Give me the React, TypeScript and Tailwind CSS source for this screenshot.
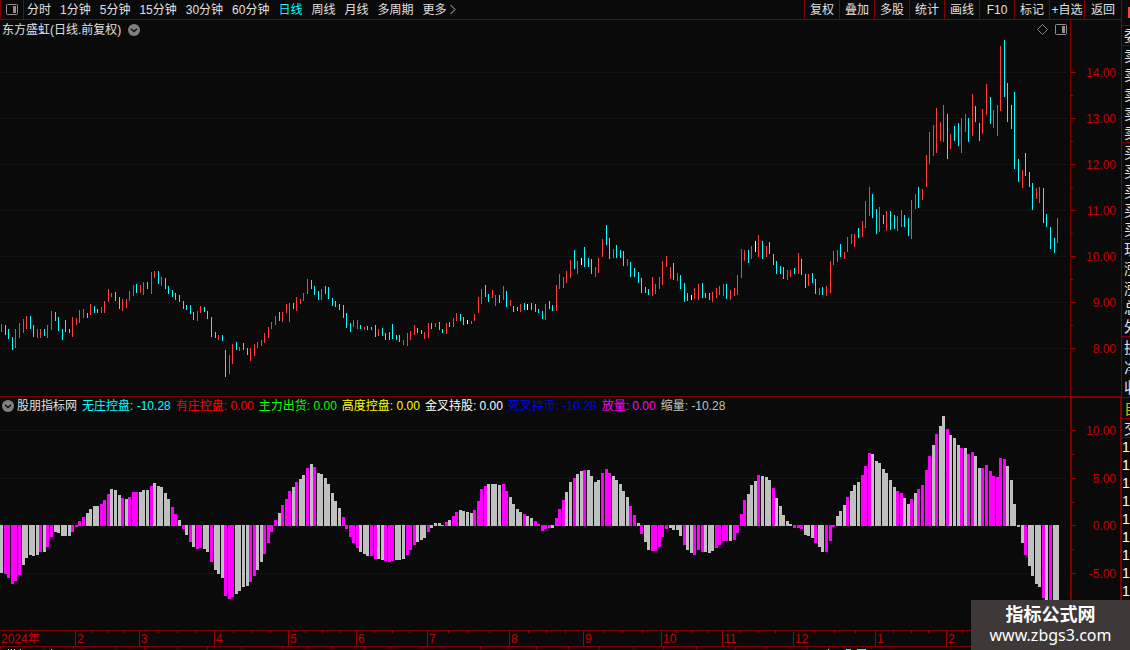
import clsx from "clsx";

const PERIODS = ["分时", "1分钟", "5分钟", "15分钟", "30分钟", "60分钟", "日线", "周线", "月线", "多周期", "更多"];
const TOOLS = ["复权", "叠加", "多股", "统计", "画线", "F10", "标记", "+自选", "返回"];

const LEGEND = [
  { label: "无庄控盘", value: "-10.28", color: "text-[#00ffff]" },
  { label: "有庄控盘", value: "0.00", color: "text-[#ff0000]" },
  { label: "主力出货", value: "0.00", color: "text-[#00ff00]" },
  { label: "高度控盘", value: "0.00", color: "text-[#ffff00]" },
  { label: "金叉持股", value: "0.00", color: "text-white" },
  { label: "死叉持币", value: "-10.28", color: "text-[#0000ff]" },
  { label: "放量", value: "0.00", color: "text-[#ff00ff]" },
  { label: "缩量", value: "-10.28", color: "text-[#c0c0c0]" },
];

const MONTHS = [
  { label: "2024年", start: 0 },
  { label: "2", start: 75 },
  { label: "3", start: 139 },
  { label: "4", start: 214 },
  { label: "5", start: 288 },
  { label: "6", start: 356 },
  { label: "7", start: 427 },
  { label: "8", start: 509 },
  { label: "9", start: 583 },
  { label: "10", start: 661 },
  { label: "11", start: 722 },
  { label: "12", start: 793 },
  { label: "1", start: 875 },
  { label: "2", start: 946 },
];
const TIME_END = 1008;

const QUOTE_GROUPS = [
  { rows: ["委"], height: "h-[20px]", color: "text-[#e0e0e0]" },
  { rows: ["卖", "卖", "卖", "卖", "卖"], height: "h-[97px]", color: "text-[#e0e0e0]" },
  { rows: ["买", "买", "买", "买", "买"], height: "h-[97px]", color: "text-[#e0e0e0]" },
  { rows: ["现", "涨", "涨", "总", "外"], height: "h-[97px]", color: "text-[#e0e0e0]" },
  { rows: ["换", "净", "收"], height: "h-[61px]", color: "text-[#e0e0e0]" },
  { rows: ["自"], height: "h-[21px]", color: "text-[#c0c000]" },
  { rows: ["交"], height: "h-[19px]", color: "text-[#e0e0e0]" },
];

// colour + high-low, r = up, c = down, w = flat
const CANDLES = `
r324-332 c325-335 c329-339 c337-350 r329-348 r323-338 r319-333 r316-329 c316-329 c325-337
r329-338 r329-338 c329-336 r325-338 r311-330 c312-321 c317-331 c329-340 c320-332 c329-333
r317-337 r318-325 r310-323 r309-318 c313-318 r304-315 c306-313 c309-313 r307-313 r301-313
r289-302 r293-297 c292-301 c297-309 r299-311 r299-308 r291-301 r285-296 c284-293 r285-293
r282-295 c282-289 r272-294 r271-278 c271-284 r277-286 c278-289 c286-294 c290-297 c293-300
c295-302 c301-309 c305-310 c305-314 c312-320 r311-321 r306-313 c307-312 c311-319 c317-337
c332-338 r335-340 c335-341 c350-377 r355-374 r344-364 c342-350 r347-351 c343-350 c348-355
r348-361 r344-356 r342-348 r340-346 r333-343 r327-338 r322-329 r316-325 c312-321 r312-322
r304-313 r303-322 c303-309 r297-311 r299-304 r293-301 r279-294 c280-289 c286-295 c291-300
r289-300 c286-294 c287-299 c298-306 c301-307 c304-310 c305-318 c313-328 c323-332 r320-327
r320-329 c325-329 r327-330 c326-330 c327-330 c325-337 r329-336 c328-336 c333-340 c332-340
c324-339 c335-340 c335-342 r340-345 r333-346 r331-340 r325-335 c328-333 c330-334 r332-339
r323-338 c323-329 r323-327 c322-330 c329-333 r323-334 c322-327 r318-327 r313-321 c314-321
c317-325 w320-324 r321-324 r314-321 r297-313 r289-304 c285-297 c294-302 r290-298 r295-306
c295-303 r286-300 c291-307 r300-306 c306-312 c307-311 r304-312 c303-310 w304-310 c303-310
c304-312 c309-313 c311-319 r304-320 c301-309 c305-311 r285-311 r274-289 r277-288 r271-283
r260-278 c250-269 r261-274 w258-265 c247-267 c258-267 c259-274 r267-277 r258-273 r239-257
c225-245 c238-259 r249-258 c245-258 c250-258 c251-266 r259-266 c262-277 c268-277 c272-283
c278-293 c287-293 c289-295 r277-296 r284-294 r277-289 r261-285 r256-267 r267-279 c263-280
r273-281 c275-289 c283-302 c293-301 w295-300 r288-299 r284-300 c283-298 c293-298 c293-300
r292-302 r288-298 r286-295 r284-296 c284-299 r290-300 r288-296 r275-295 r249-278 r250-261
c250-263 r246-259 w241-252 r235-257 c241-259 r246-257 c242-254 c254-265 c261-274 c266-274
c267-279 r270-280 r270-277 c268-274 r253-274 c259-275 c274-288 r274-286 c273-283 c279-294
r288-295 c287-295 r286-296 r261-293 r251-265 r250-262 c244-257 r252-259 r237-252 r234-244
r234-247 c228-238 r221-237 r201-228 r187-216 c194-218 c209-234 r207-232 c215-224 r211-231
c211-230 c215-229 r216-231 r210-227 c215-227 c218-236 r200-239 r194-209 c187-208 r189-200
r155-187 r132-164 r125-156 r108-153 r122-141 r105-142 c114-159 r134-149 c126-141 c123-146
r118-153 r114-132 c118-142 r94-136 c106-122 c123-141 r109-134 r84-115 c97-124 r110-128
r105-136 r46-111 c40-97 c83-122 c105-129 c92-169 c159-182 r170-188 c153-176 c172-187
c183-210 r188-199 r187-203 c188-223 c214-227 c227-249 c238-253 r218-243
`;

// m = volume up, g = volume down
const CONTROL = `
g573 m574 m578 m584 m581 m575 g565 g558 g555 g556 g555 m552 g552 m547 m537 g532 g533 g536 g536 g536
m532 m527 m521 m517 g513 g509 g506 g506 m504 m500 m494 g489 g490 g495 m498 g499 m497 m492 m492 g492
g490 g490 m486 g483 g486 g487 g493 g499 m507 m514 g520 m529 g535 m542 g547 m549 m548 g549 g552 m562
g570 g574 g578 m596 m599 m597 g594 g591 g587 g586 m582 m576 g570 g562 m554 m543 m532 m520 g513 m505
m499 m491 g487 m482 g479 g475 m468 g464 m467 g473 g474 g478 g484 g493 g501 g508 m517 m529 m537 m543
m548 g552 g554 g556 m556 m559 g559 g560 m561 m562 m561 g560 g560 g559 m555 m550 m545 g542 g540 g538
m532 g528 g523 g523 g525 m522 g520 m516 m512 g510 g511 g512 g513 m510 m501 m489 m486 g484 g484 g484
g485 m484 m491 g497 g504 g509 g512 m514 g516 g518 m521 m524 m531 m529 m528 g528 m518 m509 m500 g492
g482 m478 g474 g471 m470 g470 g476 g482 g480 m473 m469 m473 g476 g480 g484 g491 g497 m506 m515 g523
m534 g542 g550 m551 m551 m547 m537 m529 g528 g530 g530 g536 m545 g550 g553 m555 m550 m552 g552 g553
g551 m548 m545 m541 m541 g541 m540 m533 m514 m500 g494 g485 g481 m475 g476 g477 g480 m488 g498 g506
g515 g521 g524 m528 m528 m529 g535 g536 g538 m543 g547 g552 m552 m541 m527 g516 g511 g505 m497 g491
g485 g482 m475 m466 m453 g454 g461 g463 g469 g473 g480 g487 m491 m493 g498 g504 m499 g493 m489 m485
m470 m456 g445 m434 g426 g416 m429 g435 g438 g445 m448 g448 m454 m452 g456 g468 m468 m465 m471 m476
m477 m458 m459 g466 g480 g504 g527 g543 m555 g566 g576 g584 g587 m598 g605 m611 g617 g623
`;

const FILLS: Record<string, string> = {
  r: "#ff3c3c",
  c: "#00ffff",
  w: "#ffffff",
  m: "#ff00ff",
  g: "#c0c0c0",
};

const ZERO = 525;

const candles = CANDLES.trim().split(/\s+/).map((item) => {
  const [high, low] = item.slice(1).split("-").map(Number);
  return { fill: FILLS[item[0]], high, low };
});

const bars = CONTROL.trim().split(/\s+/).map((item) => {
  const y = Number(item.slice(1));
  const top = Math.min(y, ZERO);
  return { fill: FILLS[item[0]], top, height: Math.max(y, ZERO + 1) - top };
});

const barX = (i: number) => Math.floor(1.75 + i * 3.555);

function GridLines({ rows }: { rows: number[] }) {
  return (
    <>
      {rows.map((y) => (
        <line key={y} x1="1" x2="1067" y1={y + 0.5} y2={y + 0.5} stroke="#800000" strokeDasharray="1 3" />
      ))}
    </>
  );
}

type AxisProps = { top: number; width: number; height: number; ticks: [number, string][]; minor: number[]; x: number };

function Axis({ top, width, height, ticks, minor, x }: AxisProps) {
  return (
    <svg className="block h-full w-full" viewBox={`${x} ${top} ${width} ${height}`} preserveAspectRatio="xMinYMin meet">
      {ticks.map(([y, label]) => (
        <g key={label}>
          <rect x={x} y={y} width={1076 - x} height="1" fill="#a00000" />
          <text x="1116" y={y + 5} textAnchor="end" fontSize="12" fill="#c80000">
            {label}
          </text>
        </g>
      ))}
      {minor.map((y) => (
        <rect key={y} x={x} y={y} width="2" height="1" fill="#a00000" />
      ))}
    </svg>
  );
}

function PanelIcon() {
  return (
    <svg className="block h-[11px] w-3" viewBox="0 0 12 11">
      <rect x="0.5" y="0.5" width="11" height="10" rx="1" fill="none" stroke="#909090" />
      <rect x="7" y="2" width="3" height="7" fill="#909090" />
    </svg>
  );
}

function CollapseButton({ label }: { label: string }) {
  return (
    <button aria-label={label} className="block h-3 w-3">
      <svg className="block h-3 w-3" viewBox="0 0 12 12">
        <circle cx="6" cy="6" r="6" fill="#808080" />
        <path d="M3 4.8 6 7.6 9 4.8" fill="none" stroke="#0a0a0a" strokeWidth="1.3" />
      </svg>
    </button>
  );
}

function Toolbar() {
  return (
    <header className="flex h-5 items-stretch border-b border-[#800000] text-[#e0e0e0]">
      <button aria-label="面板" className="flex w-6 items-center justify-center border-x border-[#800000]">
        <PanelIcon />
      </button>
      <nav className="flex items-center gap-[9px] pl-[3px]">
        {PERIODS.map((p) => (
          <button key={p} className={clsx("whitespace-nowrap", p === "日线" && "text-[#00ffff]")}>
            {p}
          </button>
        ))}
      </nav>
      <svg className="ml-[3px] h-[11px] w-[6px] self-center" viewBox="0 0 6 11">
        <path d="M0.5 1 5 5.5 0.5 10" fill="none" stroke="#c0c0c0" />
      </svg>
      <div className="ml-auto flex">
        {TOOLS.map((t) => (
          <button key={t} className="w-[35px] whitespace-nowrap border-l border-[#800000] last:w-[37px]">
            {t}
          </button>
        ))}
      </div>
    </header>
  );
}

function PricePanel() {
  return (
    <section className="flex h-[376px]">
      <div className="min-w-0 flex-1">
        <div className="flex h-5 items-center pb-px pl-[2px] pr-[3px] text-[#e0e0e0]">
          <h1>东方盛虹(日线.前复权)</h1>
          <div className="ml-[7px]">
            <CollapseButton label="展开" />
          </div>
          <div className="ml-auto flex items-center gap-[7px]">
            <svg className="h-[11px] w-[11px]" viewBox="0 0 11 11">
              <path d="M5.5 0.5 10.5 5.5 5.5 10.5 0.5 5.5Z" fill="none" stroke="#808080" />
            </svg>
            <PanelIcon />
          </div>
        </div>
        <svg
          className="block h-[356px] w-full"
          viewBox="0 40 1070 356"
          preserveAspectRatio="none"
          shapeRendering="crispEdges"
        >
          <GridLines rows={[72, 118, 164, 210, 256, 302, 348]} />
          {candles.map((c, i) => (
            <rect key={i} x={barX(i)} y={c.high} width="1" height={c.low - c.high} fill={c.fill} />
          ))}
        </svg>
      </div>
      <div className="w-[51px] border-l border-[#800000]">
        <Axis
          x={1071}
          top={20}
          width={50}
          height={376}
          ticks={[
            [72, "14.00"],
            [118, "13.00"],
            [164, "12.00"],
            [210, "11.00"],
            [256, "10.00"],
            [302, "9.00"],
            [348, "8.00"],
          ]}
          minor={[95, 141, 187, 233, 279, 325]}
        />
      </div>
    </section>
  );
}

function ControlPanel() {
  return (
    <section className="flex h-[234px]">
      <div className="min-w-0 flex-1 border-t border-[#800000]">
        <div className="flex h-[18px] items-center gap-[5px] whitespace-nowrap pb-px pl-[2px]">
          <div className="flex items-center gap-[3px] text-[#e0e0e0]">
            <CollapseButton label="收起" />
            <h2>股朋指标网</h2>
          </div>
          {LEGEND.map((item) => (
            <span key={item.label} className={item.color}>
              {item.label}: {item.value}
            </span>
          ))}
        </div>
        <svg
          className="block h-[215px] w-full"
          viewBox="0 415 1070 215"
          preserveAspectRatio="none"
          shapeRendering="crispEdges"
        >
          <GridLines rows={[430, 478, 525, 573]} />
          {bars.map((b, i) => (
            <rect key={i} x={barX(i) - 1} y={b.top} width="3" height={b.height} fill={b.fill} />
          ))}
        </svg>
      </div>
      <div className="w-[51px] border-l-2 border-r border-t-2 border-[#800000]">
        <Axis
          x={1072}
          top={398}
          width={48}
          height={232}
          ticks={[
            [430, "10.00"],
            [478, "5.00"],
            [525, "0.00"],
            [573, "-5.00"],
          ]}
          minor={[454, 502, 549]}
        />
      </div>
    </section>
  );
}

function TimeAxis() {
  return (
    <div className="flex h-[17px] border-y border-[#800000] text-[#c80000]">
      {MONTHS.map((m, i) => {
        const end = MONTHS[i + 1]?.start ?? TIME_END;
        return (
          <div
            key={m.start}
            className={clsx("relative shrink-0 pl-px leading-[17px]", i > 0 && "border-l border-[#a00000]")}
            style={{ width: end - m.start }}
          >
            {m.label}
            {i > 0 && (
              <div className="absolute inset-x-0 top-0 flex justify-evenly">
                <span className="h-[2px] w-px bg-[#a00000]" />
                <span className="h-[2px] w-px bg-[#a00000]" />
                <span className="h-[2px] w-px bg-[#a00000]" />
              </div>
            )}
          </div>
        );
      })}
    </div>
  );
}

// top edge of the next strip: its scale marks and the first rows of its captions
function NextStrip() {
  const marks = [0, 43, 73, 115, 144, 177, 207, 241, 282, 308, 332, 364, 390, 422, 480, 508, 536, 568, 599, 633, 663, 696, 735, 766, 807, 829, 871];
  return (
    <svg className="block h-[3px] w-full" viewBox="0 0 1121 3" preserveAspectRatio="none" shapeRendering="crispEdges">
      {marks.map((x) => (
        <rect key={x} x={x} y="0" width="1" height="2" fill="#a00000" />
      ))}
      {[8, 11, 14, 20, 51, 828].map((x) => (
        <rect key={x} x={x} y="2" width="1" height="1" fill="#e0e0e0" />
      ))}
      <rect x="846" y="2" width="5" height="1" fill="#00ffff" />
      <rect x="857" y="2" width="9" height="1" fill="#00ffff" />
    </svg>
  );
}

function QuoteStrip() {
  return (
    <aside className="w-[9px] shrink-0 overflow-hidden border-l border-[#800000] text-[15px]">
      <div className="flex h-[26px] items-center justify-end border-b border-[#800000]">
        <span className="h-[11px] w-[2px] bg-[#ff4040]" />
      </div>
      {QUOTE_GROUPS.map((group, i) => (
        <div key={i} className={clsx("flex flex-col border-b border-[#800000] pl-[2px]", group.height, group.color)}>
          {group.rows.map((row, j) => (
            <div key={j} className="flex flex-1 items-center whitespace-nowrap leading-none">
              {row}
            </div>
          ))}
        </div>
      ))}
      {Array.from({ length: 9 }, (_, i) => (
        <div key={i} className="h-[18px] text-sm leading-[18px] text-white">
          1
        </div>
      ))}
    </aside>
  );
}

export default function App() {
  return (
    <div className="relative flex min-h-screen overflow-hidden bg-[#0a0a0a] font-['Liberation_Sans','Noto_Sans_CJK_SC',sans-serif] text-xs leading-4">
      <main className="min-w-0 flex-1">
        <Toolbar />
        <PricePanel />
        <ControlPanel />
        <TimeAxis />
        <NextStrip />
      </main>
      <QuoteStrip />
      <div className="absolute bottom-0 right-0 flex h-[50px] w-[159px] flex-col items-center justify-center bg-[#3e3838] text-white">
        <p className="text-lg font-bold leading-5">指标公式网</p>
        <p className="font-['Noto_Sans',sans-serif] text-base leading-5">www.zbgs3.com</p>
      </div>
    </div>
  );
}
